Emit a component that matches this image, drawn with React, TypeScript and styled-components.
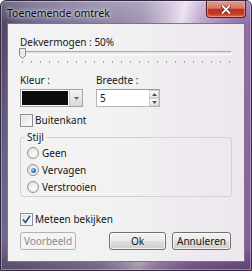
import styled, { createGlobalStyle } from 'styled-components'

const GlobalStyle = createGlobalStyle`
  html, body {
    margin: 0;
    padding: 0;
    background: #ffffff;
  }
  body {
    font-family: 'Noto Sans', 'Open Sans', sans-serif;
  }
`

const Window = styled.div`
  width: 252px;
  height: 271px;
  box-sizing: border-box;
  display: flex;
  flex-direction: column;
  border: 1px solid #33293f;
  border-radius: 6px 6px 0 0;
  background:
    linear-gradient(180deg, rgba(255, 255, 255, 0.22) 0%, rgba(255, 255, 255, 0) 9%, rgba(0, 0, 0, 0) 90%, rgba(40, 25, 50, 0.4) 100%),
    linear-gradient(100deg, #4a3f60 0%, #6a5f85 10%, #857a9c 30%, #9d90b0 48%, #cabcd4 57%, #e8dfec 62%, #c1a6cf 68%, #9672ad 80%, #825c9a 100%);
  box-shadow: inset 0 0 0 1px rgba(255, 255, 255, 0.35);
  overflow: hidden;
`

const TitleBar = styled.div`
  height: 22px;
  display: flex;
  align-items: flex-start;
  justify-content: space-between;
  padding-left: 6px;
`

const Title = styled.div`
  font-size: 10.5px;
  line-height: 12px;
  margin-top: 6px;
  color: #0c0c0c;
  text-shadow: 0 0 6px rgba(255, 255, 255, 0.9), 0 0 3px rgba(255, 255, 255, 0.8);
`

const CloseButton = styled.div`
  width: 40px;
  height: 17px;
  margin-right: 5px;
  box-sizing: border-box;
  border: 1px solid #5a1c18;
  border-top: none;
  border-radius: 0 0 4px 4px;
  background: linear-gradient(180deg, #e39a8c 0%, #d47a6a 45%, #bd321f 52%, #c23a24 78%, #de6a45 100%);
  box-shadow: inset 0 0 0 1px rgba(255, 190, 175, 0.5);
  display: flex;
  align-items: center;
  justify-content: center;
`

const Client = styled.div`
  flex: 1;
  margin: 0 6px 8px 6px;
  border: 1px solid #7d7290;
  background: linear-gradient(90deg, #f3f3f3 0%, #f1f1f1 55%, #efebf0 70%, #ede7ee 100%);
  padding: 12px 11px 0 12px;
  font-size: 10px;
  color: #161616;
  display: flex;
  flex-direction: column;
`

const Label = styled.div`
  line-height: 12px;
  height: 12px;
  white-space: nowrap;
`

const Slider = styled.div`
  position: relative;
  width: 212px;
  height: 20px;
`

const Track = styled.div`
  margin-top: 3px;
  height: 2px;
  border-top: 1px solid #a9a9a9;
  border-left: 1px solid #a9a9a9;
  border-bottom: 1px solid #ffffff;
  border-right: 1px solid #ffffff;
  background: #e6e6e6;
`

const Thumb = styled.svg`
  position: absolute;
  left: -1px;
  top: 0;
`

const Ticks = styled.div`
  display: flex;
  justify-content: space-between;
  margin: 6px 2px 0 2px;
`

const Tick = styled.span`
  width: 1px;
  height: 2px;
  background: #a5a5a5;
`

const FieldGrid = styled.div`
  display: grid;
  grid-template-columns: 76px 64px;
  row-gap: 3px;
  margin-top: 6px;
`

const Combo = styled.div`
  width: 63px;
  height: 18px;
  box-sizing: border-box;
  border: 1px solid #a3a3a3;
  background: #ffffff;
  display: flex;
`

const Swatch = styled.div`
  flex: 1;
  margin: 1px;
  background: #0b0b0d;
`

const DropButton = styled.div`
  width: 12px;
  border-left: 1px solid #c8c8c8;
  background: linear-gradient(180deg, #f4f4f4 0%, #e6e6e6 50%, #d8d8d8 100%);
  display: flex;
  align-items: center;
  justify-content: center;
`

const SpinBox = styled.div`
  width: 64px;
  height: 18px;
  box-sizing: border-box;
  border: 1px solid #b5b5b5;
  border-top-color: #9a9a9a;
  background: #ffffff;
  display: flex;
  align-items: center;
  padding-left: 3px;
`

const SpinValue = styled.span`
  flex: 1;
  line-height: 12px;
`

const SpinButtons = styled.div`
  width: 10px;
  height: 100%;
  display: flex;
  flex-direction: column;
`

const SpinArrow = styled.div`
  flex: 1;
  border: 1px solid #d0d0d0;
  background: linear-gradient(180deg, #fafafa, #e8e8e8);
  display: flex;
  align-items: center;
  justify-content: center;
`

const CheckRow = styled.div<{ $top: number }>`
  display: flex;
  align-items: center;
  gap: 2px;
  margin-top: ${(p) => p.$top}px;
  height: 14px;
  line-height: 12px;
`

const Box = styled.span`
  width: 13px;
  height: 13px;
  box-sizing: border-box;
  border: 1px solid #8e8f8f;
  background: linear-gradient(135deg, #dcdcdc 0%, #f2f2f2 60%, #ffffff 100%);
  box-shadow: inset 0 0 0 1px #f4f4f4;
  display: flex;
  align-items: center;
  justify-content: center;
`

const Group = styled.fieldset`
  margin: 4px 0 0 0;
  padding: 4px 0 3px 6px;
  width: 212px;
  box-sizing: border-box;
  border: 1px solid #d5d0d8;
  border-radius: 3px;
  display: flex;
  flex-direction: column;
  gap: 5px;
`

const Legend = styled.legend`
  padding: 0 2px;
  margin-left: -2px;
  line-height: 12px;
  font-size: 10px;
`

const RadioRow = styled.label`
  display: flex;
  align-items: center;
  gap: 3px;
  height: 12px;
  line-height: 12px;
`

const Radio = styled.span<{ $checked?: boolean }>`
  width: 12px;
  height: 12px;
  box-sizing: border-box;
  border-radius: 50%;
  border: 1px solid #959595;
  background: radial-gradient(circle at 60% 60%, #ffffff 0%, #e8e8e8 60%, #d2d2d2 100%);
  display: flex;
  align-items: center;
  justify-content: center;

  &::after {
    content: '';
    display: ${(p) => (p.$checked ? 'block' : 'none')};
    width: 5px;
    height: 5px;
    border-radius: 50%;
    background: radial-gradient(circle at 35% 35%, #9ed0f5 0%, #2f6db4 60%, #1c4b8a 100%);
  }
`

const ButtonRow = styled.div`
  display: flex;
  align-items: center;
  margin-top: 6px;
`

const Button = styled.div<{ $width: number; $disabled?: boolean; $gap?: number }>`
  width: ${(p) => p.$width}px;
  height: 18px;
  margin-left: ${(p) => p.$gap ?? 0}px;
  box-sizing: border-box;
  border: 1px solid ${(p) => (p.$disabled ? '#adb2b5' : '#707070')};
  border-radius: 3px;
  background: ${(p) =>
    p.$disabled
      ? '#f4f4f4'
      : 'linear-gradient(180deg, #f2f2f2 0%, #ebebeb 49%, #dddddd 50%, #cfcfcf 100%)'};
  box-shadow: inset 0 0 0 1px ${(p) => (p.$disabled ? '#f4f4f4' : 'rgba(255,255,255,0.7)')};
  color: ${(p) => (p.$disabled ? '#8a8a8a' : '#161616')};
  display: flex;
  align-items: center;
  justify-content: center;
  line-height: 12px;
`

const ticks = Array.from({ length: 24 })

export default function App() {
  return (
    <>
      <GlobalStyle />
      <Window>
        <TitleBar>
          <Title>Toenemende omtrek</Title>
          <CloseButton>
            <svg width="10" height="9" viewBox="0 0 10 9">
              <path d="M1.5 1 L8.5 8 M8.5 1 L1.5 8" stroke="#5a1a14" strokeWidth="3.2" strokeLinecap="round" />
              <path d="M1.5 1 L8.5 8 M8.5 1 L1.5 8" stroke="#ffffff" strokeWidth="1.8" strokeLinecap="round" />
            </svg>
          </CloseButton>
        </TitleBar>
        <Client>
          <Label>Dekvermogen : 50%</Label>
          <Slider>
            <Track />
            <Thumb width="7" height="11" viewBox="0 0 7 11">
              <path d="M0.5 0.5 H6.5 V7.5 L3.5 10.5 L0.5 7.5 Z" fill="#ececec" stroke="#8a8a8a" />
            </Thumb>
            <Ticks>
              {ticks.map((_, i) => (
                <Tick key={i} />
              ))}
            </Ticks>
          </Slider>
          <FieldGrid>
            <Label>Kleur :</Label>
            <Label>Breedte :</Label>
            <Combo>
              <Swatch />
              <DropButton>
                <svg width="5" height="3" viewBox="0 0 5 3">
                  <path d="M0 0 H5 L2.5 3 Z" fill="#666" />
                </svg>
              </DropButton>
            </Combo>
            <SpinBox>
              <SpinValue>5</SpinValue>
              <SpinButtons>
                <SpinArrow>
                  <svg width="5" height="3" viewBox="0 0 5 3">
                    <path d="M0 3 H5 L2.5 0 Z" fill="#555" />
                  </svg>
                </SpinArrow>
                <SpinArrow>
                  <svg width="5" height="3" viewBox="0 0 5 3">
                    <path d="M0 0 H5 L2.5 3 Z" fill="#555" />
                  </svg>
                </SpinArrow>
              </SpinButtons>
            </SpinBox>
          </FieldGrid>
          <CheckRow $top={6}>
            <Box />
            <span>Buitenkant</span>
          </CheckRow>
          <Group>
            <Legend>Stijl</Legend>
            <RadioRow>
              <Radio />
              <span>Geen</span>
            </RadioRow>
            <RadioRow>
              <Radio $checked />
              <span>Vervagen</span>
            </RadioRow>
            <RadioRow>
              <Radio />
              <span>Verstrooien</span>
            </RadioRow>
          </Group>
          <CheckRow $top={15}>
            <Box>
              <svg width="9" height="9" viewBox="0 0 9 9">
                <path d="M1 4.5 L3.5 7.5 L8 0.8" fill="none" stroke="#2a4f8f" strokeWidth="1.6" />
              </svg>
            </Box>
            <span>Meteen bekijken</span>
          </CheckRow>
          <ButtonRow>
            <Button $width={56} $disabled>
              Voorbeeld
            </Button>
            <Button $width={57} $gap={33}>
              Ok
            </Button>
            <Button $width={59} $gap={6}>
              Annuleren
            </Button>
          </ButtonRow>
        </Client>
      </Window>
    </>
  )
}
